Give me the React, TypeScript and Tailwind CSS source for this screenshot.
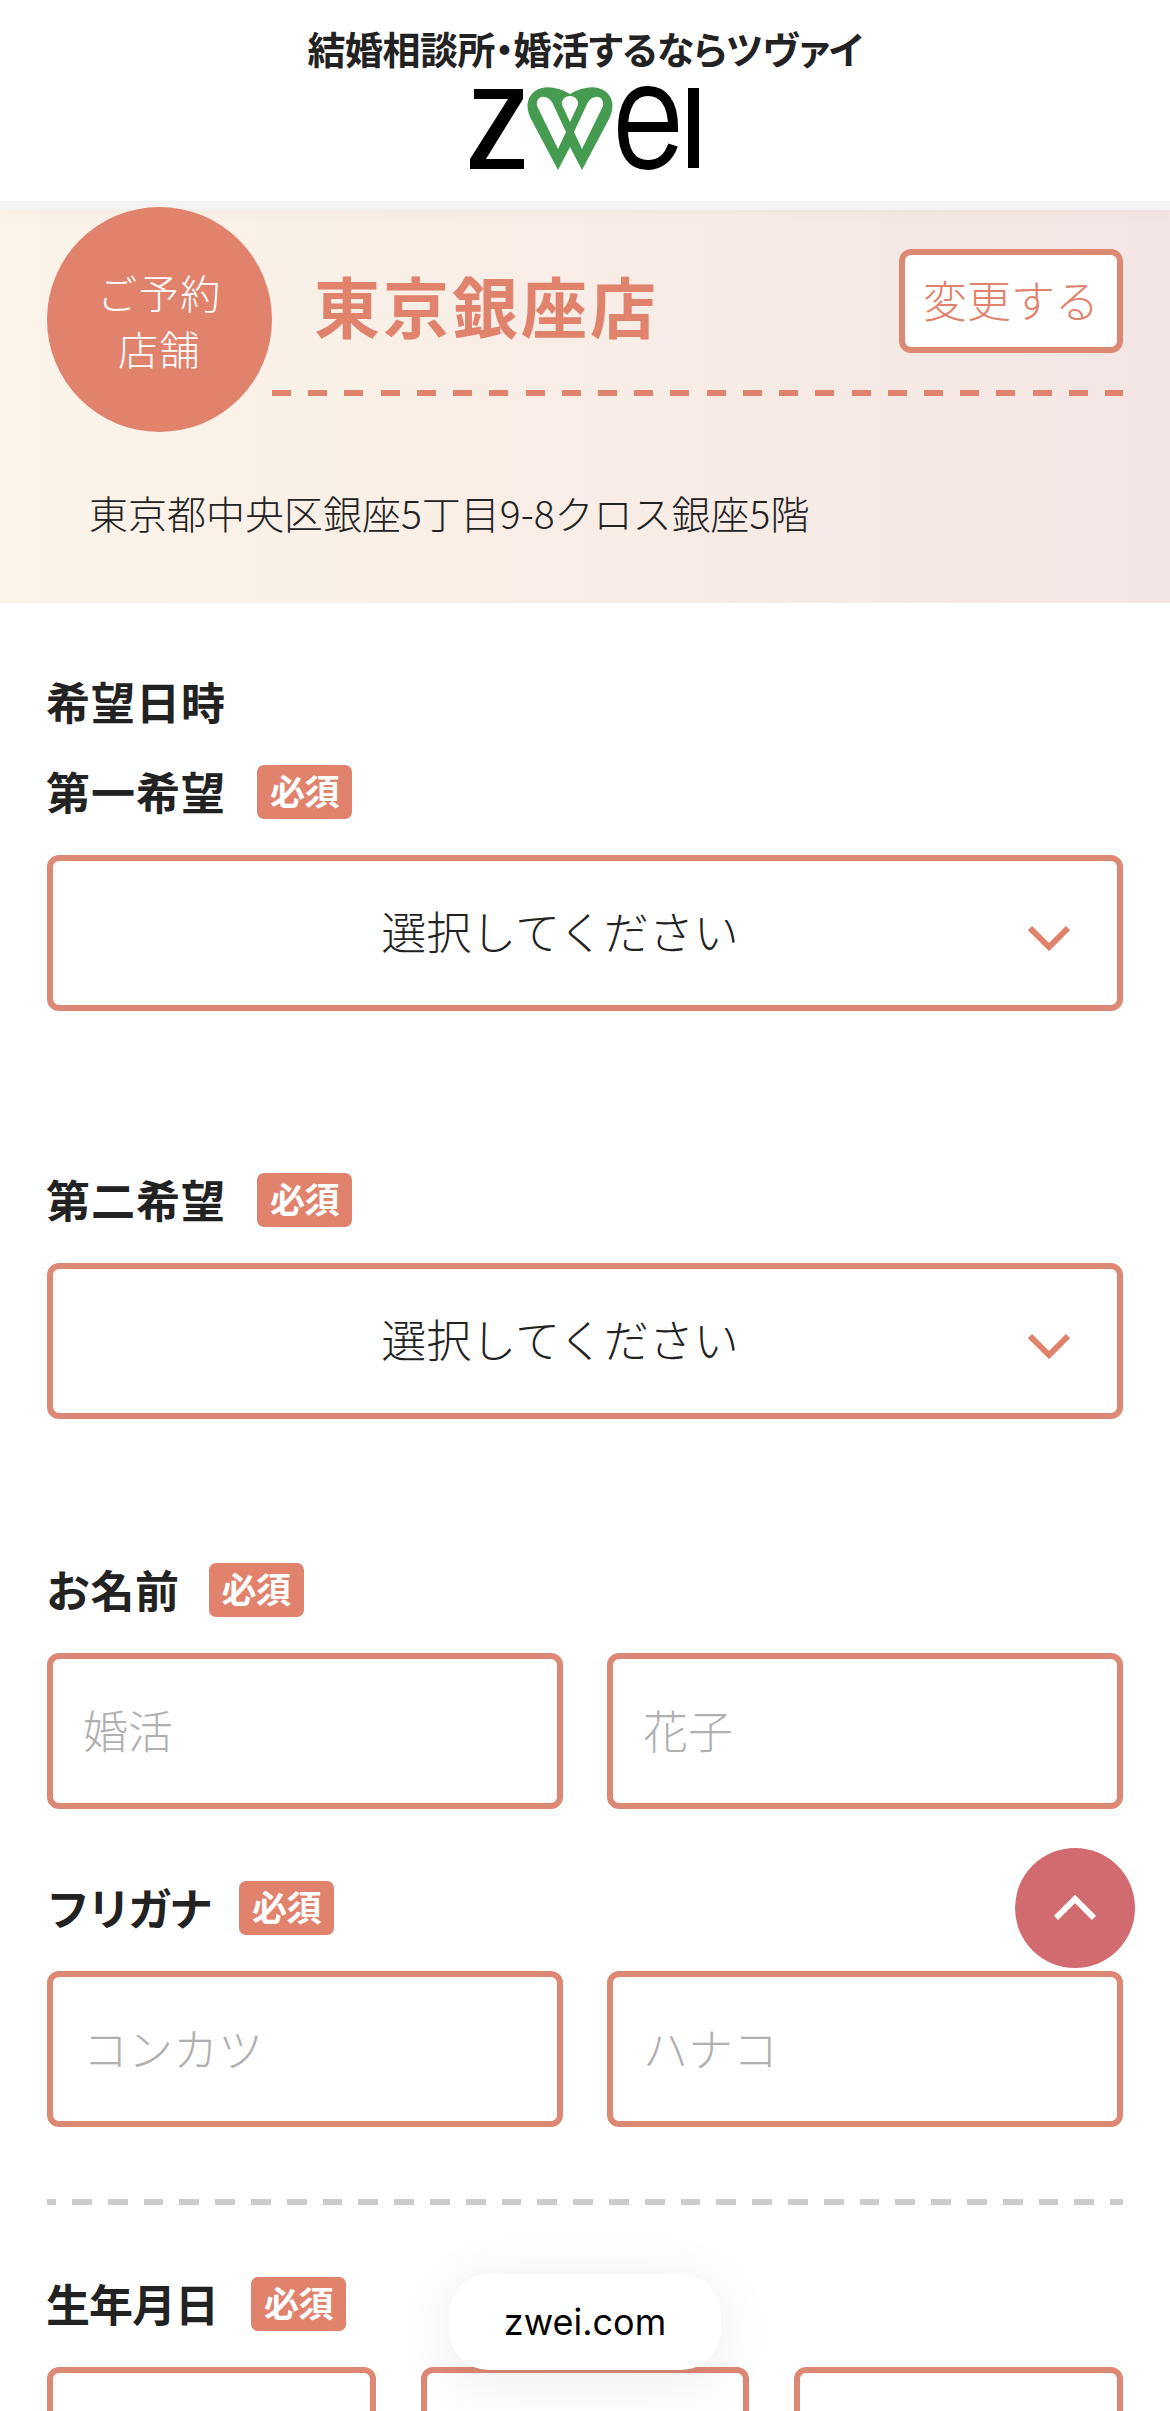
function Badge() {
  return (
    <span className="flex h-[54px] w-[95px] items-center justify-center rounded-[7px] bg-[#e0826c] pb-[3px] text-[35px] font-bold tracking-[-0.5px] text-white">
      必須
    </span>
  );
}

function Label({ text, textClass, gapClass }: { text: string; textClass: string; gapClass: string }) {
  return (
    <div className={`flex h-[54px] items-center ${gapClass}`}>
      <span className={`-ml-[1px] pb-[3px] text-[44px] leading-[54px] font-bold text-[#222] ${textClass}`}>{text}</span>
      <Badge />
    </div>
  );
}

function Chevron({ up }: { up?: boolean }) {
  return (
    <svg width="42" height="26" viewBox="0 0 42 26" className={up ? "rotate-180" : ""} fill="none" stroke="currentColor" strokeWidth="6">
      <polyline points="2,3 21,22 40,3" />
    </svg>
  );
}

function SelectBox() {
  return (
    <div className="relative mt-[36px] flex h-[156px] items-center justify-center rounded-[12px] border-[6px] border-[#dd8873] bg-white pr-[50px] pb-[4px]">
      <span className="text-[45px] font-light text-[#222]">選択してください</span>
      <div className="absolute top-[64px] right-[47px] leading-none text-[#e0826c]">
        <Chevron />
      </div>
    </div>
  );
}

function TextBox({ placeholder }: { placeholder: string }) {
  return (
    <input
      placeholder={placeholder}
      className="h-[156px] w-full min-w-0 rounded-[12px] border-[6px] border-[#dd8873] bg-white px-[30px] pb-[3px] text-[45px] font-light outline-none placeholder:text-[#b0b0b0]"
    />
  );
}

function Logo() {
  return (
    <svg width="240" height="90" viewBox="0 0 240 90" className="mt-[9px]">
      <polygon points="9,4 58,4 58,14 21,74 59,74 59,84 5,84 5,74 43,14 9,14" fill="#000" />
      {/* heart W: silhouette with three counters */}
      <path
        fillRule="evenodd"
        fill="#459b50"
        d="M93 85 L66 34 C60 22 62 12 70 6 C78 0 92 1 105 9 C118 1 132 0 140 6 C148 12 150 22 144 34 L117 85 L105 62 Z
           M72 21 C71 15 75 11 79 12 C83 12 86 15 88 19 L101 47 L93 64 Z
           M138 21 C139 15 135 11 131 12 C127 12 124 15 122 19 L109 47 L117 64 Z
           M105 37 L97 20 C96 15 100 11 105 11 C110 11 114 15 113 20 Z"
      />
      <path
        d="M158 42 H208 C208 18 198 6 183 6 C166 6 158 22 158 44 C158 68 167 80 183 80 C195 80 204 72 208 60"
        fill="none"
        stroke="#000"
        strokeWidth="10"
      />
      <rect x="223" y="3" width="11" height="80" fill="#000" />
    </svg>
  );
}

export default function App() {
  return (
    <div className="relative h-[2411px] w-[1170px] overflow-hidden bg-white font-['Noto_Sans_CJK_JP','Noto_Sans',sans-serif] text-[#222]">
      {/* Header */}
      <header className="relative z-10 flex h-[201px] flex-col items-center bg-white pt-[20px] shadow-[0_9px_0_#f3f3f3,0_12px_14px_rgba(0,0,0,0.03)]">
        <div className="text-[38px] leading-[56px] font-bold tracking-[-0.5px] text-[#222] [font-feature-settings:'palt']">結婚相談所・婚活するならツヴァイ</div>
        <Logo />
      </header>

      {/* Selected store */}
      <section className="bg-gradient-to-r from-[#fbf4e9] to-[#f4e6e4] px-[47px] pt-[6px] pb-[60px]">
        <div className="flex">
          <div className="relative z-20 flex h-[225px] w-[225px] shrink-0 flex-col items-center justify-center rounded-full bg-[#e0826c] text-[40px] leading-[56px] font-light tracking-[1.5px] text-white">
            <span>ご予約</span>
            <span>店舗</span>
          </div>
          <div className="flex-1 pt-[42px]">
            <div className="flex items-start justify-between">
              <h1 className="pt-[5px] pl-[42px] text-[66px] leading-[100px] font-bold tracking-[3px] text-[#e0826c]">東京銀座店</h1>
              <button className="flex h-[104px] w-[224px] items-center justify-center rounded-[12px] border-[6px] border-[#dd8873] bg-white pb-[5px] text-[44px] font-light text-[#e0826c]">
                変更する
              </button>
            </div>
            <div className="mt-[36px] h-[6px] bg-[repeating-linear-gradient(90deg,#e0826c_0_19px,transparent_19px_36.22px)]" />
          </div>
        </div>
        <p className="mt-[52px] pb-[3px] pl-[42px] text-[39px] leading-[56px] font-light text-[#222]">東京都中央区銀座5丁目9-8クロス銀座5階</p>
      </section>

      {/* Form */}
      <main className="px-[47px] pt-[68px]">
        <h2 className="-ml-[1px] text-[44px] leading-[60px] font-bold tracking-[1px] text-[#222]">希望日時</h2>

        <div className="mt-[34px]">
          <Label text="第一希望" textClass="tracking-[1px]" gapClass="gap-[31px]" />
          <SelectBox />
        </div>

        <div className="mt-[162px]">
          <Label text="第二希望" textClass="tracking-[1px]" gapClass="gap-[31px]" />
          <SelectBox />
        </div>

        <div className="mt-[144px]">
          <Label text="お名前" textClass="tracking-[0.5px]" gapClass="gap-[29px]" />
          <div className="mt-[36px] grid grid-cols-2 gap-[44px]">
            <TextBox placeholder="婚活" />
            <TextBox placeholder="花子" />
          </div>
        </div>

        <div className="mt-[72px]">
          <Label text="フリガナ" textClass="tracking-[-3px]" gapClass="gap-[29px]" />
          <div className="mt-[36px] grid grid-cols-2 gap-[44px]">
            <TextBox placeholder="コンカツ" />
            <TextBox placeholder="ハナコ" />
          </div>
        </div>

        <div className="mt-[72px] h-[6px] bg-[repeating-linear-gradient(90deg,#cccccc_-10.8px,#cccccc_9px,transparent_9px,transparent_25px)]" />

        <div className="mt-[72px]">
          <Label text="生年月日" textClass="tracking-[-1px]" gapClass="gap-[33px]" />
          <div className="mt-[36px] grid grid-cols-3 gap-[45px]">
            <div className="h-[156px] rounded-[12px] border-[6px] border-[#dd8873] bg-white" />
            <div className="h-[156px] rounded-[12px] border-[6px] border-[#dd8873] bg-white" />
            <div className="h-[156px] rounded-[12px] border-[6px] border-[#dd8873] bg-white" />
          </div>
        </div>
      </main>

      {/* Scroll to top */}
      <button className="absolute top-[1848px] left-[1015px] flex h-[120px] w-[120px] items-center justify-center rounded-full bg-[#d26b70] text-white">
        <Chevron up />
      </button>

      {/* Browser domain pill */}
      <div className="absolute top-[2274px] left-[449px] flex h-[96px] w-[272px] items-center justify-center rounded-[40px] bg-white font-['Inter',sans-serif] text-[36px] text-black shadow-[0_10px_60px_rgba(0,0,0,0.08)]">
        zwei.com
      </div>
    </div>
  );
}
